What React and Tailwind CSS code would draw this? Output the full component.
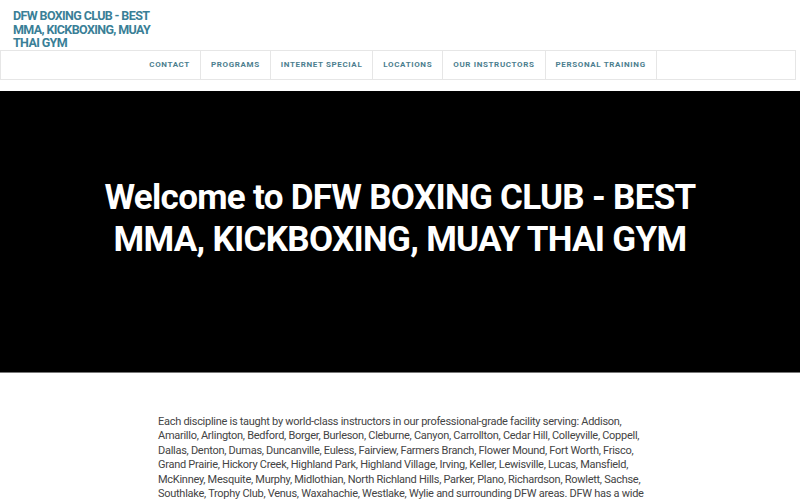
import React from "react";

const nav = ["CONTACT", "PROGRAMS", "INTERNET SPECIAL", "LOCATIONS", "OUR INSTRUCTORS", "PERSONAL TRAINING"];

export default function App() {
  return (
    <div className="w-[800px] h-[500px] overflow-hidden bg-white" style={{ fontFamily: "Roboto, 'Liberation Sans', sans-serif" }}>
      <header className="pt-[9px]">
        <div className="pl-[13px] w-[165px] text-[12.5px] leading-[13.5px] font-bold tracking-[-0.05em] text-[#3a7f97]">
          DFW BOXING CLUB - BEST MMA, KICKBOXING, MUAY THAI GYM
        </div>
        <nav className="mr-[4px] h-[30px] border border-[#e6e6e6] flex justify-center">
          {nav.map((n) => (
            <div key={n} className="px-[10px] flex items-center text-[8px] font-bold tracking-[0.08em] text-[#4c7e8e] border-r border-[#e6e6e6]">
              {n}
            </div>
          ))}
        </nav>
      </header>
      <section className="mt-[11px] h-[282px] pb-[24px] bg-black border-b border-[#777] flex items-center justify-center">
        <h1 className="text-white text-[35px] leading-[42px] font-bold tracking-[-0.02em] text-center w-[640px]">
          Welcome to DFW BOXING CLUB - BEST MMA, KICKBOXING, MUAY THAI GYM
        </h1>
      </section>
      <section className="pt-[42px] pl-[158px]">
        <p className="w-[494px] text-[11px] leading-[14.6px] tracking-[-0.025em] text-[#444]">
          Each discipline is taught by world-class instructors in our professional-grade facility serving: Addison, Amarillo, Arlington, Bedford, Borger, Burleson, Cleburne, Canyon, Carrollton, Cedar Hill, Colleyville, Coppell, Dallas, Denton, Dumas, Duncanville, Euless, Fairview, Farmers Branch, Flower Mound, Fort Worth, Frisco, Grand Prairie, Hickory Creek, Highland Park, Highland Village, Irving, Keller, Lewisville, Lucas, Mansfield, McKinney, Mesquite, Murphy, Midlothian, North Richland Hills, Parker, Plano, Richardson, Rowlett, Sachse, Southlake, Trophy Club, Venus, Waxahachie, Westlake, Wylie and surrounding DFW areas. DFW has a wide variety of martial arts gyms.
        </p>
      </section>
    </div>
  );
}
